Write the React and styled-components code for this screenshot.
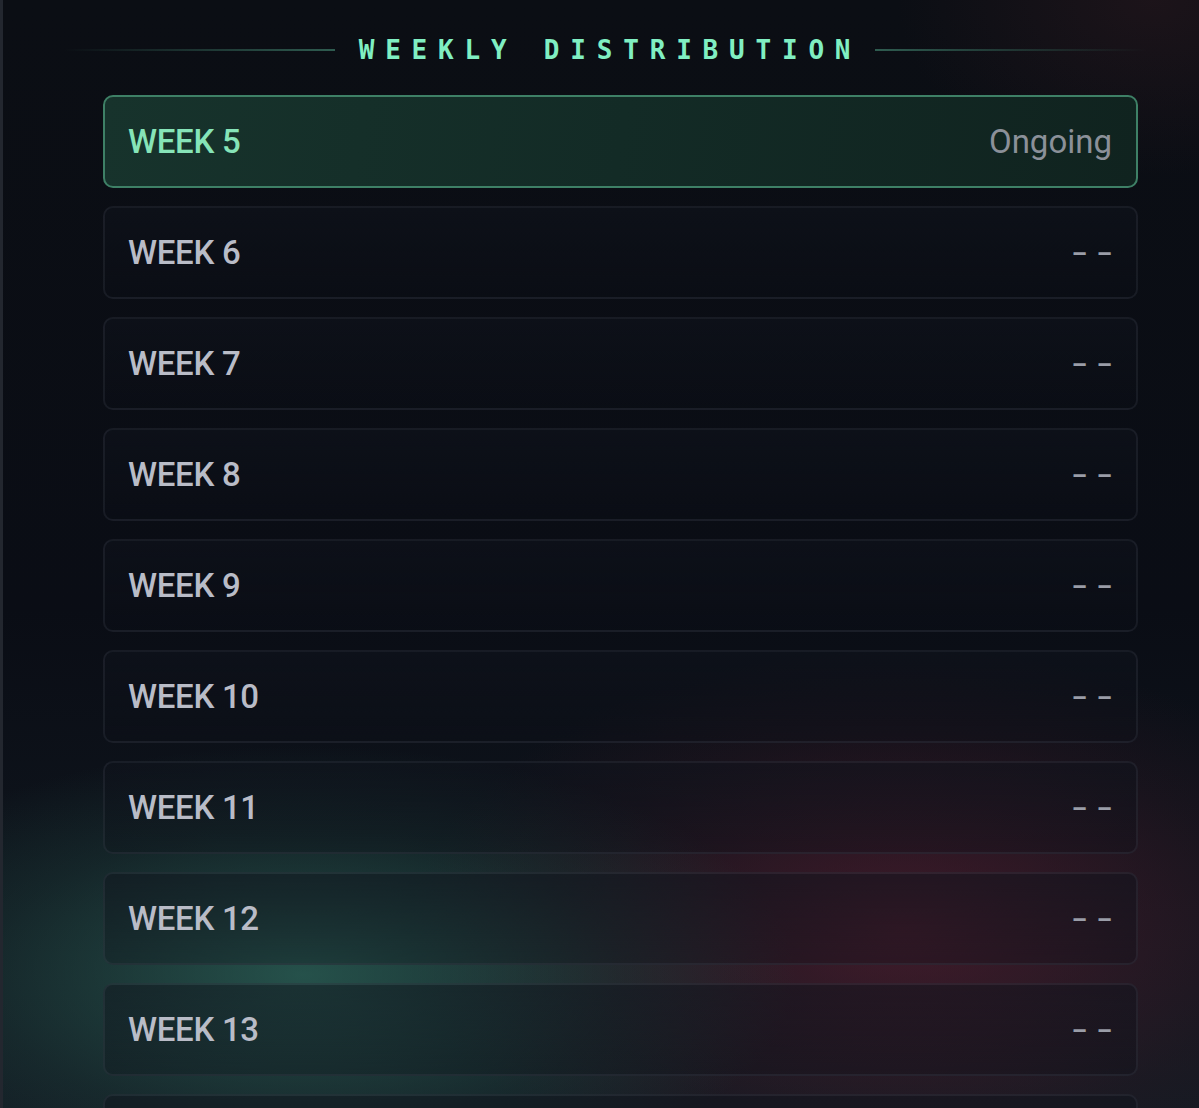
import styled, { createGlobalStyle } from "styled-components";

const GlobalStyle = createGlobalStyle`
  *{
    margin: 0;
    padding: 0;
    box-sizing: border-box;
  }
  html, body{
    background: #0a0d14;
  }
  body{
    font-family: Roboto, "Liberation Sans", sans-serif;
  }
`;

const weeks = [
  { label: "WEEK 5", status: "Ongoing", active: true },
  { label: "WEEK 6" },
  { label: "WEEK 7" },
  { label: "WEEK 8" },
  { label: "WEEK 9" },
  { label: "WEEK 10" },
  { label: "WEEK 11" },
  { label: "WEEK 12" },
  { label: "WEEK 13" },
  { label: "WEEK 14" },
];

export default function App() {
  return (
    <>
      <GlobalStyle />
      <Page>
        <Header>
          <Line />
          <Title>WEEKLY DISTRIBUTION</Title>
          <Line $right />
        </Header>
        <List>
          {weeks.map((w) => (
            <Row key={w.label} $active={w.active}>
              <WeekLabel $active={w.active}>{w.label}</WeekLabel>
              {w.status ? <Status>{w.status}</Status> : <Dashes>– –</Dashes>}
            </Row>
          ))}
        </List>
      </Page>
    </>
  );
}

const Page = styled.div`
  width: 1199px;
  height: 1108px;
  overflow: hidden;
  border-left: 3px solid #23272f;
  background:
    radial-gradient(ellipse 580px 270px at 300px 975px, rgba(46, 104, 92, 0.72), rgba(40, 90, 80, 0.25) 55%, transparent 85%),
    radial-gradient(ellipse 580px 330px at 900px 930px, rgba(96, 30, 50, 0.6), rgba(70, 26, 40, 0.2) 60%, transparent 85%),
    radial-gradient(ellipse 320px 220px at 1150px 0px, rgba(60, 30, 36, 0.35), transparent 80%),
    linear-gradient(180deg, #0b0e14 0%, #0a0d15 55%, #121a22 100%);
  padding-top: 36px;
`;

const Header = styled.div`
  display: flex;
  align-items: center;
  gap: 24px;
  margin: 0 52px 0 60px;
  height: 28px;
`;

const Line = styled.div`
  flex: 1;
  height: 2px;
  background: ${(p) =>
    p.$right
      ? "linear-gradient(90deg, #2f5c50, rgba(47,92,80,0))"
      : "linear-gradient(90deg, rgba(47,92,80,0), #2f5c50)"};
`;

const Title = styled.h2`
  font-family: "DejaVu Sans Mono", "Liberation Mono", monospace;
  font-weight: bold;
  font-size: 26px;
  letter-spacing: 10.8px;
  margin-right: -10px;
  color: #80efc2;
  white-space: nowrap;
`;

const List = styled.div`
  display: flex;
  flex-direction: column;
  gap: 18px;
  margin: 31px 0 0 100px;
  width: 1035px;
`;

const Row = styled.div`
  display: flex;
  align-items: center;
  justify-content: space-between;
  height: 93px;
  flex-shrink: 0;
  padding: 0 24px 0 23px;
  border-radius: 10px;
  border: 2px solid ${(p) => (p.$active ? "#3e8066" : "rgba(120, 130, 150, 0.12)")};
  background: ${(p) =>
    p.$active
      ? "linear-gradient(100deg, #17332c 0%, #132b26 50%, #10231f 100%)"
      : "linear-gradient(180deg, rgba(16, 20, 29, 0.5), rgba(12, 15, 23, 0.3))"};
`;

const WeekLabel = styled.span`
  font-family: Roboto, "Liberation Sans", sans-serif;
  font-weight: 500;
  font-size: 33px;
  letter-spacing: -0.3px;
  color: ${(p) => (p.$active ? "#86e4b8" : "#b9bcc7")};
`;

const Status = styled.span`
  font-family: Roboto, "Liberation Sans", sans-serif;
  font-size: 33px;
  color: #8b9099;
`;

const Dashes = styled.span`
  font-family: Roboto, "Liberation Sans", sans-serif;
  font-weight: 700;
  font-size: 24px;
  letter-spacing: 2px;
  margin-right: -2px;
  padding-top: 3px;
  color: #9a9da8;
`;
